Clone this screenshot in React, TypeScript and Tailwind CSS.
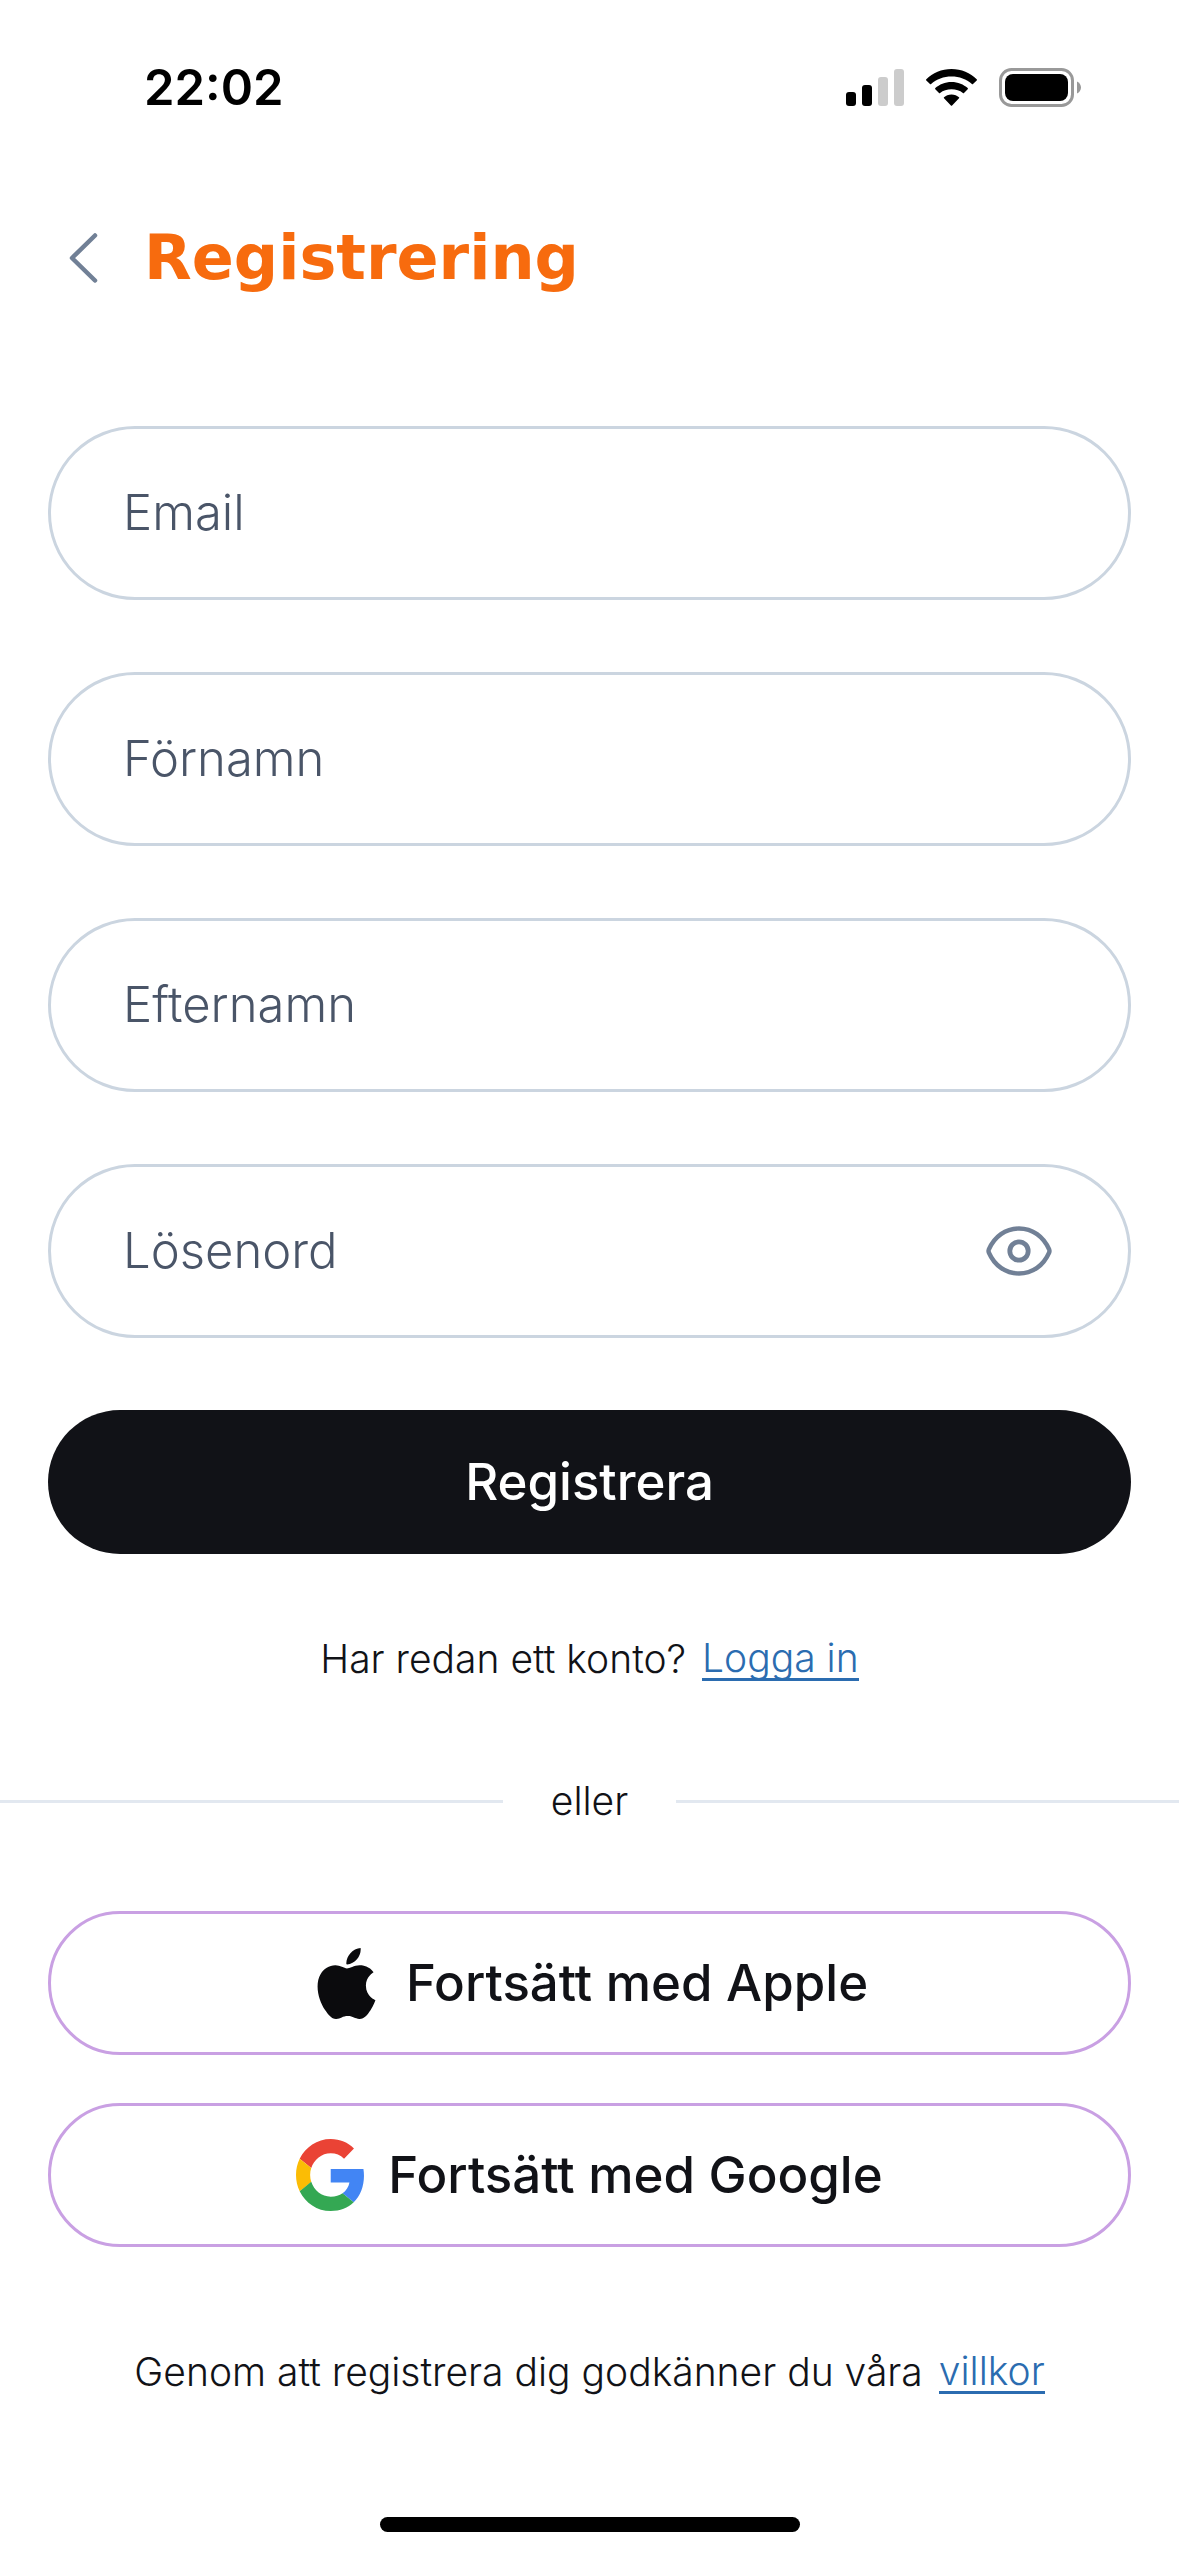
import { useState } from "react";
import { SiApple } from "react-icons/si";

const fields = [
  { id: "email", label: "Email", type: "email" },
  { id: "firstName", label: "Förnamn", type: "text" },
  { id: "lastName", label: "Efternamn", type: "text" },
  { id: "password", label: "Lösenord", type: "password" },
];

function StatusBar() {
  return (
    <div className="flex h-[174px] items-start justify-between pt-[57px] pr-[98px] pl-[144px]">
      <span className="text-[49px] leading-[62px] font-semibold text-black">22:02</span>
      <div className="flex items-center gap-[22px] pt-[11px]">
        <svg width="58" height="40" viewBox="0 0 58 40" aria-hidden="true">
          <rect x="0" y="24" width="10" height="14" rx="3" fill="#000" />
          <rect x="16" y="17" width="10" height="21" rx="3" fill="#000" />
          <rect x="32" y="9" width="10" height="29" rx="3" fill="#ccc" />
          <rect x="48" y="1" width="10" height="37" rx="3" fill="#ccc" />
        </svg>
        <svg width="51" height="40" viewBox="0 0 51 40" aria-hidden="true">
          <path d="M25.5 1C35.400 1 44.400 4.900 50.700 11.300Q51.200 11.900 50.700 12.400L47 16.100Q46.500 16.600 45.900 16.100C40.500 11.100 33.300 8.600 25.500 8.600S10.500 11.100 5.100 16.100Q4.500 16.600 4 16.100L.3 12.400Q-.2 11.900 .3 11.300C6.600 4.900 15.600 1 25.500 1Z" />
          <path d="M25.500 13.900C31.900 13.900 37.700 16.300 41.700 20.100Q42.200 20.700 41.700 21.300L38 25Q37.500 25.500 36.900 25C33.900 22.500 29.900 21.300 25.500 21.300S17.100 22.500 14.100 25Q13.500 25.500 13 25L9.300 21.300Q8.800 20.700 9.300 20.100C13.300 16.300 19.100 13.900 25.500 13.900Z" />
          <path d="M25.500 26.400C28.500 26.400 31.200 27.500 33 29.200Q33.500 29.800 33 30.300L26.100 37.500Q25.500 38.100 24.900 37.500L18 30.300Q17.500 29.800 18 29.200C19.800 27.500 22.500 26.400 25.500 26.400Z" />
        </svg>
        <svg width="82" height="40" viewBox="0 0 82 40" aria-hidden="true">
          <rect x="1.500" y="1.500" width="72" height="36" rx="11" fill="none" stroke="#999" strokeWidth="3" />
          <rect x="6" y="6" width="63" height="27" rx="8" fill="#000" />
          <path d="M78 13.500C80.500 14.500 82 17 82 19.500S80.500 24.500 78 25.500Z" fill="#999" />
        </svg>
      </div>
    </div>
  );
}

function EyeIcon() {
  return (
    <svg width="66" height="50" viewBox="0 0 66 50" fill="none" stroke="#718096" strokeWidth="4.400" strokeLinejoin="round" aria-hidden="true">
      <path d="M2.800 26.500Q2.200 25 2.800 23.500C8.500 10.500 19.500 2.500 33 2.500S57.500 10.500 63.200 23.500Q63.800 25 63.200 26.500C57.500 39.500 46.500 47.500 33 47.500S8.500 39.500 2.800 26.500Z" />
      <circle cx="33" cy="25" r="9.200" strokeWidth="4.800" />
    </svg>
  );
}

function GoogleIcon() {
  return (
    <svg width="68" height="72" viewBox="0 0 47 48" preserveAspectRatio="none" aria-hidden="true">
      <path fill="#EA4335" d="M24 9.500c3.540 0 6.710 1.220 9.210 3.600l6.850-6.850C35.900 2.380 30.470 0 24 0 14.620 0 6.510 5.380 2.560 13.220l7.980 6.190C12.430 13.720 17.740 9.500 24 9.500z" />
      <path fill="#4285F4" d="M46.980 24.550c0-1.570-.15-3.090-.38-4.550H24v9.020h12.940c-.58 2.960-2.260 5.480-4.780 7.180l7.730 6c4.510-4.180 7.090-10.360 7.090-17.650z" />
      <path fill="#FBBC05" d="M10.530 28.590c-.48-1.450-.76-2.990-.76-4.590s.27-3.140.76-4.590l-7.980-6.190C.92 16.460 0 20.120 0 24c0 3.880.92 7.540 2.560 10.780l7.970-6.190z" />
      <path fill="#34A853" d="M24 48c6.480 0 11.930-2.130 15.890-5.810l-7.730-6c-2.150 1.450-4.920 2.300-8.160 2.300-6.260 0-11.570-4.220-13.470-9.910l-7.980 6.190C6.510 42.620 14.620 48 24 48z" />
    </svg>
  );
}

export default function App() {
  const [showPassword, setShowPassword] = useState(false);

  return (
    <div className="flex min-h-screen flex-col bg-white font-['Inter','Liberation_Sans',sans-serif] text-[#111217]">
      <StatusBar />

      <header className="flex h-[168px] items-center gap-[42px] px-[66px]">
        <a href="#back" aria-label="Tillbaka" className="flex h-[84px] w-9 items-center">
          <svg width="36" height="54" viewBox="0 0 36 54" fill="none" stroke="#718096" strokeWidth="4.500" strokeLinecap="round" strokeLinejoin="round">
            <path d="M29 4.500L6 27L29 49.500" />
          </svg>
        </a>
        <h1 className="font-['DejaVu_Sans',sans-serif] text-[62px] leading-[84px] font-bold text-[#f76b0e]">Registrering</h1>
      </header>

      <main className="flex flex-col pt-[84px]">
        <form className="flex flex-col gap-[72px] px-12" onSubmit={(e) => e.preventDefault()}>
          {fields.map((field) => (
            <div key={field.id} className="relative flex h-[174px] items-center rounded-full border-3 border-[#cbd5e0] pr-[76px] pl-[72px] text-[49px] font-light">
              <input
                id={field.id}
                name={field.id}
                type={field.type === "password" && showPassword ? "text" : field.type}
                placeholder=" "
                className="peer h-full min-w-0 flex-1 bg-transparent outline-none"
              />
              {/* the label sits in the box until something is typed */}
              <label
                htmlFor={field.id}
                className="pointer-events-none absolute inset-y-0 left-[72px] flex items-center text-[#4a5568] peer-not-placeholder-shown:hidden"
              >
                {field.label}
              </label>
              {field.type === "password" && (
                <button type="button" aria-label="Visa lösenord" onClick={() => setShowPassword(!showPassword)}>
                  <EyeIcon />
                </button>
              )}
            </div>
          ))}
          <button type="submit" className="h-36 rounded-full bg-[#111217] text-[51px] font-medium text-white">
            Registrera
          </button>
        </form>

        <p className="mt-[78px] flex items-center justify-center gap-4 text-[39px] leading-[54px] font-light">
          Har redan ett konto?
          <a href="#login" className="border-b-3 border-[#2b6cb0] leading-10 text-[#2b6cb0]">Logga in</a>
        </p>

        <div className="mt-[88px] flex items-center gap-12 text-[39px] leading-[54px] font-light">
          <div className="h-[3px] flex-1 bg-[#e2e8f0]" />
          eller
          <div className="h-[3px] flex-1 bg-[#e2e8f0]" />
        </div>

        <div className="mt-[83px] flex flex-col gap-12 px-12">
          <button type="button" className="flex h-36 items-center justify-center gap-6 rounded-full border-3 border-[#c9a0e3] text-[51px] font-medium">
            <SiApple size={71} color="#0b0b0d" aria-hidden="true" />
            Fortsätt med Apple
          </button>
          <button type="button" className="flex h-36 items-center justify-center gap-6 rounded-full border-3 border-[#c9a0e3] text-[51px] font-medium">
            <GoogleIcon />
            Fortsätt med Google
          </button>
        </div>

        <p className="mt-[98px] flex items-center justify-center gap-4 text-[39px] leading-[54px] font-light">
          Genom att registrera dig godkänner du våra
          <a href="#terms" className="border-b-3 border-[#2b6cb0] leading-10 text-[#2b6cb0]">villkor</a>
        </p>
      </main>

      <div className="mx-auto mt-auto mb-6 h-[15px] w-[420px] rounded-full bg-black" />
    </div>
  );
}
